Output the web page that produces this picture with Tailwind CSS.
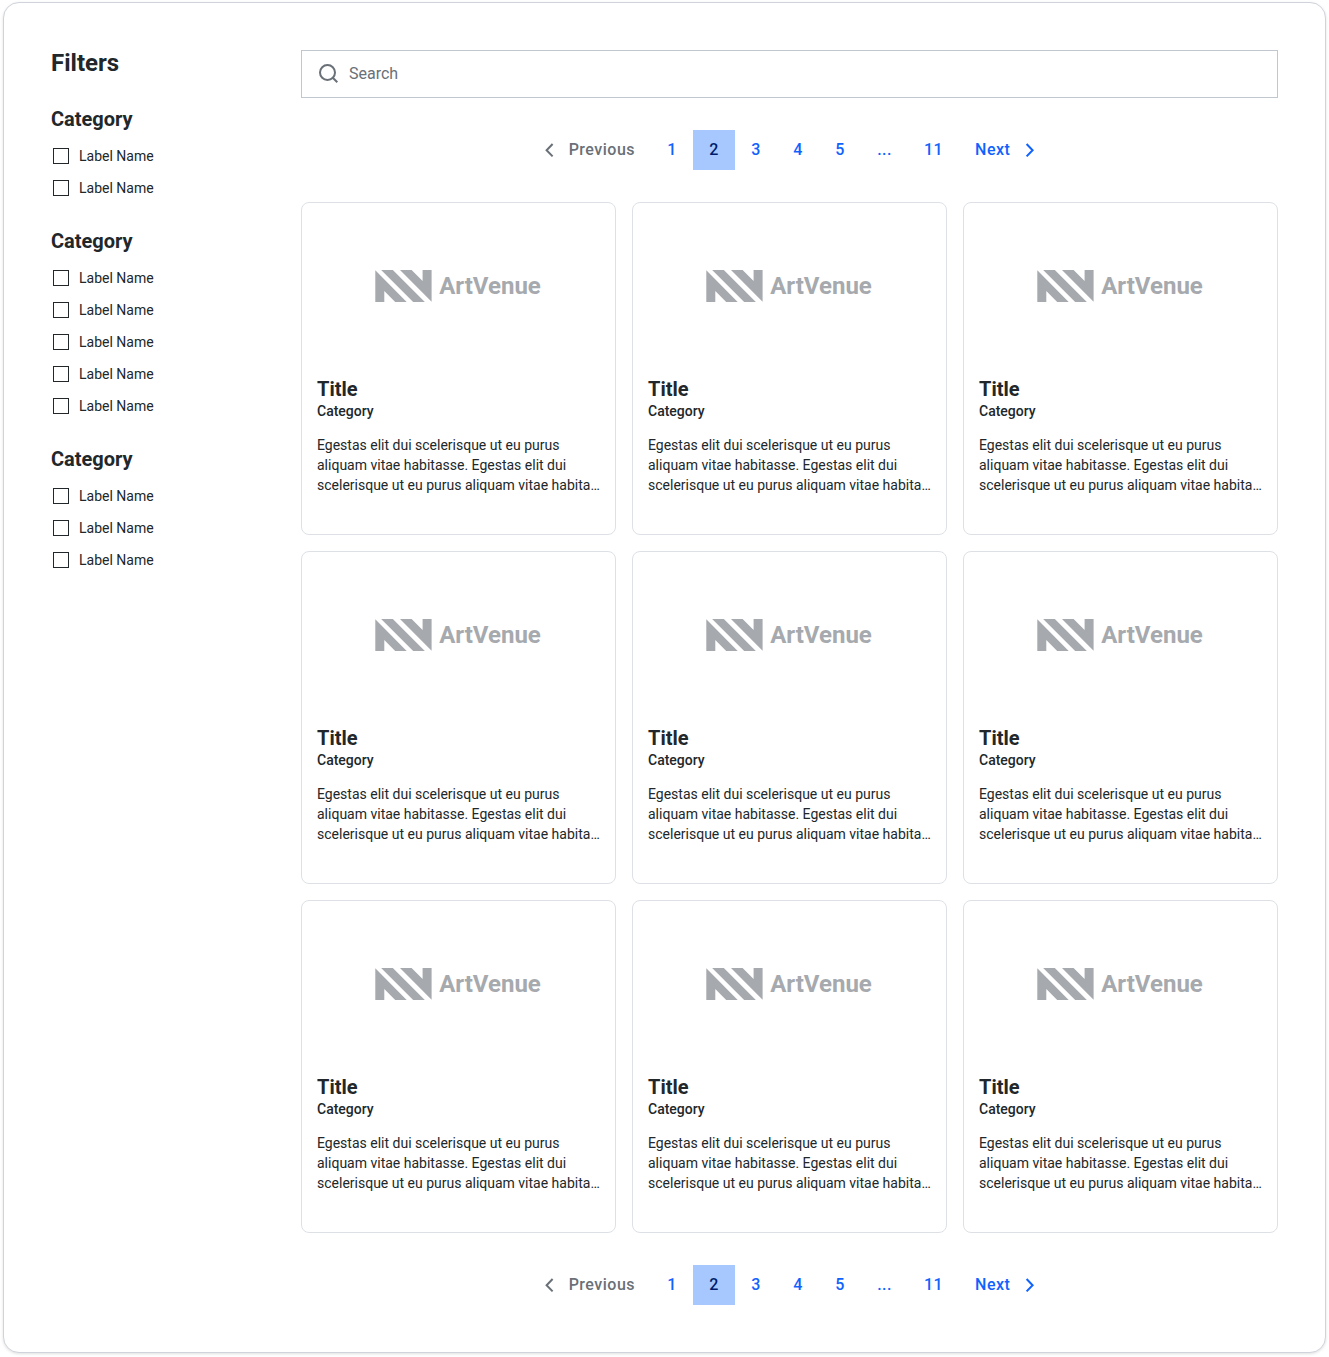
<!DOCTYPE html>
<html lang="en">
<head>
<meta charset="utf-8">
<title>ArtVenue</title>
<script src="https://cdn.jsdelivr.net/npm/@tailwindcss/browser@4"></script>
</head>
<body class="bg-white font-['Roboto',sans-serif] text-[#21272a]">
<div class="pl-[3px] pr-[3px] pt-[2px] pb-[4px] h-[1357px]">
<main class="flex h-[1351px] rounded-2xl border border-[#d0d3db] bg-white pl-[47px] pr-[47px] pt-[47px] shadow-[0_1px_3px_rgba(0,0,0,0.12)]">
  <aside class="w-[250px] shrink-0 -mt-[3px]">
    <h2 class="text-2xl leading-8 font-bold">Filters</h2>
    <div id="filters" class="mt-[27px] flex flex-col gap-7"></div>
  </aside>
  <section class="w-[977px] shrink-0">
    <div class="flex h-12 items-center border border-[#c1c7cd] pl-[15px]">
      <svg class="size-6" viewBox="0 0 24 24" fill="none" stroke="#697077" stroke-width="2"><circle cx="10.5" cy="10.5" r="7.5"/><path d="M15.8 15.8 L20.3 20.3"/></svg>
      <span class="ml-2 text-base text-[#697077]">Search</span>
    </div>
    <nav class="pager mt-8 flex h-10 justify-center text-base font-medium tracking-[0.5px] text-[#0f62fe]"></nav>
    <div id="cards" class="mt-8 grid grid-cols-3 gap-4"></div>
    <nav class="pager mt-8 flex h-10 justify-center text-base font-medium tracking-[0.5px] text-[#0f62fe]"></nav>
  </section>
</main>
</div>

<template id="pager">
  <a class="flex items-center pl-3 pr-4 text-[#697077]"><svg class="mr-2 size-6" viewBox="0 0 24 24" fill="none" stroke="currentColor" stroke-width="2"><path d="M15.6 6 L9.6 12.2 L15.6 18.4"/></svg>Previous</a>
  <a class="flex w-[42px] items-center justify-center">1</a>
  <a class="flex w-[42px] items-center justify-center bg-[#a6c8ff] text-[#001d6c]">2</a>
  <a class="flex w-[42px] items-center justify-center">3</a>
  <a class="flex w-[42px] items-center justify-center">4</a>
  <a class="flex w-[42px] items-center justify-center">5</a>
  <a class="flex w-[47px] items-center justify-center">...</a>
  <a class="flex w-[51px] items-center justify-center">11</a>
  <a class="flex items-center pl-4 pr-3">Next<svg class="ml-2 size-6" viewBox="0 0 24 24" fill="none" stroke="currentColor" stroke-width="2"><path d="M8.6 6 L14.6 12.2 L8.6 18.4"/></svg></a>
</template>

<template id="card">
  <article class="h-[333px] rounded-lg border border-[#dde1e6]">
    <div class="flex h-[166px] items-center justify-center gap-[7px] pr-px text-[#a6a9ad]">
      <svg class="h-8 w-[57px]" viewBox="0 0 57 32" fill="currentColor"><path d="M0.3 0.3 L31.7 32 H20.2 L9.3 21 V32 H0.3Z"/><path d="M6.2 0 H17.8 L49.8 32 H38.2Z"/><path d="M56.6 31.7 L25 0 H36.6 L47.6 11 V0 H56.6Z"/></svg>
      <span class="text-2xl font-bold">ArtVenue</span>
    </div>
    <div class="px-[15px] pt-[9px]">
      <h3 class="text-xl leading-[22px] font-bold">Title</h3>
      <p class="text-sm leading-[22px] font-medium">Category</p>
      <p class="mt-[13px] text-sm leading-5 whitespace-nowrap">Egestas elit dui scelerisque ut eu purus<br>aliquam vitae habitasse. Egestas elit dui<br>scelerisque ut eu purus aliquam vitae habita…</p>
    </div>
  </article>
</template>

<template id="option">
  <label class="flex h-6 items-center"><span class="ml-[2px] mr-[10px] size-4 border border-[#21272a]"></span><span class="text-sm">Label Name</span></label>
</template>

<script>
  const copy = id => document.getElementById(id).content.cloneNode(true);
  document.querySelectorAll('.pager').forEach(n => n.append(copy('pager')));
  for (let i = 0; i < 9; i++) document.getElementById('cards').append(copy('card'));
  [2, 5, 3].forEach(count => {
    const group = document.createElement('div');
    group.innerHTML = '<h3 class="text-xl leading-[26px] font-bold">Category</h3><div class="mt-3 flex flex-col gap-2"></div>';
    for (let i = 0; i < count; i++) group.lastChild.append(copy('option'));
    document.getElementById('filters').append(group);
  });
</script>
</body>
</html>
